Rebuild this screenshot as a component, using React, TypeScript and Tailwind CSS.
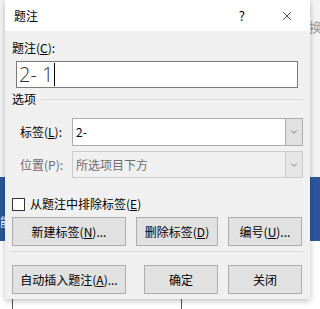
import { ChevronDown, X } from "lucide-react";

const font = { fontFamily: '"Noto Sans CJK SC", "Noto Sans", sans-serif' };

const Btn = ({ w, children }: { w: string; children: React.ReactNode }) => (
  <button
    className={`${w} h-[29px] border border-[#adadad] bg-[#e1e1e1] text-[12px] leading-none text-black`}
    type="button"
  >
    {children}
  </button>
);

const Combo = ({ text, disabled }: { text: string; disabled?: boolean }) => (
  <div
    className={
      disabled
        ? "flex h-[27px] flex-1 border border-[#cccccc] bg-[#f0f0f0]"
        : "flex h-[28px] flex-1 border border-[#adadad] bg-white"
    }
  >
    <span
      className={
        disabled
          ? "flex flex-1 items-center pl-[3px] text-[12px] text-[#6d6d6d]"
          : "flex flex-1 items-center pl-[3px] text-[12px] text-black"
      }
    >
      {text}
    </span>
    <span
      className={
        disabled
          ? "flex w-[17px] items-center justify-center border-l border-[#cccccc] bg-[#e5e5e5]"
          : "flex w-[17px] items-center justify-center border-l border-[#adadad] bg-[#e1e1e1]"
      }
    >
      <ChevronDown className="h-[10px] w-[10px] text-[#444]" strokeWidth={1.5} />
    </span>
  </div>
);

export default function App() {
  return (
    <div className="relative h-[309px] w-[320px] overflow-hidden bg-[#f3f3f3]" style={font}>
      {/* desktop behind */}
      <div className="absolute left-[309px] top-[17px] text-[13px] text-[#9a9a9a]">换</div>
      <div className="absolute left-0 top-[177px] h-[64px] w-[320px] bg-[#2b579a]" />
      <div className="absolute left-0 top-[213px] text-[12px] text-white">能</div>
      <div className="absolute left-0 top-[241px] h-[68px] w-[320px] bg-white" />
      <div className="absolute left-[12px] top-[241px] h-[68px] w-px bg-[#555]" />
      <div className="absolute left-[181px] top-[241px] h-[68px] w-px bg-[#555]" />

      {/* dialog */}
      <div className="absolute left-[5px] top-0 flex h-[299px] w-[305px] flex-col bg-[#f0f0f0] shadow-[0_2px_6px_rgba(0,0,0,0.25)]">
        <div className="flex h-[31px] items-center bg-white pl-[9px]">
          <span className="flex-1 text-[12px] text-black">题注</span>
          <span className="mr-[35px] text-[13px] text-black">?</span>
          <X className="mr-[16px] h-[14px] w-[14px] text-black" strokeWidth={1.2} />
        </div>

        <div className="flex flex-1 flex-col px-[7px]">
          <div className="mt-[9px] h-[16px] text-[12px] leading-[16px] text-black">
            题注(<span className="underline">C</span>):
          </div>
          <div className="ml-[4px] mt-[5px] flex h-[27px] w-[282px] items-center border border-[#7a7a7a] bg-white pl-[2px]">
            <span
              className="text-[20px] font-light leading-none text-[#333]"
              style={{ fontFamily: '"Open Sans", "Noto Sans", sans-serif' }}
            >
              2- 1
            </span>
            <span className="ml-[1px] h-[23px] w-px bg-black" />
          </div>

          <div className="mt-[3px] flex h-[16px] items-center">
            <span className="text-[12px] leading-[16px] text-black">选项</span>
            <span className="ml-[5px] h-px flex-1 bg-[#dadada]" />
          </div>

          <div className="mt-[11px] flex items-center">
            <span className="ml-[8px] w-[52px] text-[12px] text-black">
              标签(<span className="underline">L</span>):
            </span>
            <Combo text="2-" />
          </div>

          <div className="mt-[5px] flex items-center">
            <span className="ml-[8px] w-[52px] text-[12px] text-[#6d6d6d]">位置(P):</span>
            <Combo disabled text="所选项目下方" />
          </div>

          <div className="mt-[17px] flex items-center">
            <span className="h-[13px] w-[13px] border border-[#333] bg-white" />
            <span className="ml-[5px] text-[12px] text-black">
              从题注中排除标签(<span className="underline">E</span>)
            </span>
          </div>

          <div className="mt-[4px] flex gap-[10px]">
            <Btn w="w-[114px]">
              新建标签(<span className="underline">N</span>)...
            </Btn>
            <Btn w="w-[82px]">
              删除标签(<span className="underline">D</span>)
            </Btn>
            <Btn w="w-[74px]">
              编号(<span className="underline">U</span>)...
            </Btn>
          </div>

          <div className="mt-[5px] h-px w-[291px] bg-[#dadada]" />

          <div className="mt-[13px] flex">
            <Btn w="w-[114px]">
              自动插入题注(<span className="underline">A</span>)...
            </Btn>
            <span className="w-[18px]" />
            <Btn w="w-[74px]">确定</Btn>
            <span className="w-[10px]" />
            <Btn w="w-[74px]">关闭</Btn>
          </div>
        </div>
      </div>
    </div>
  );
}
